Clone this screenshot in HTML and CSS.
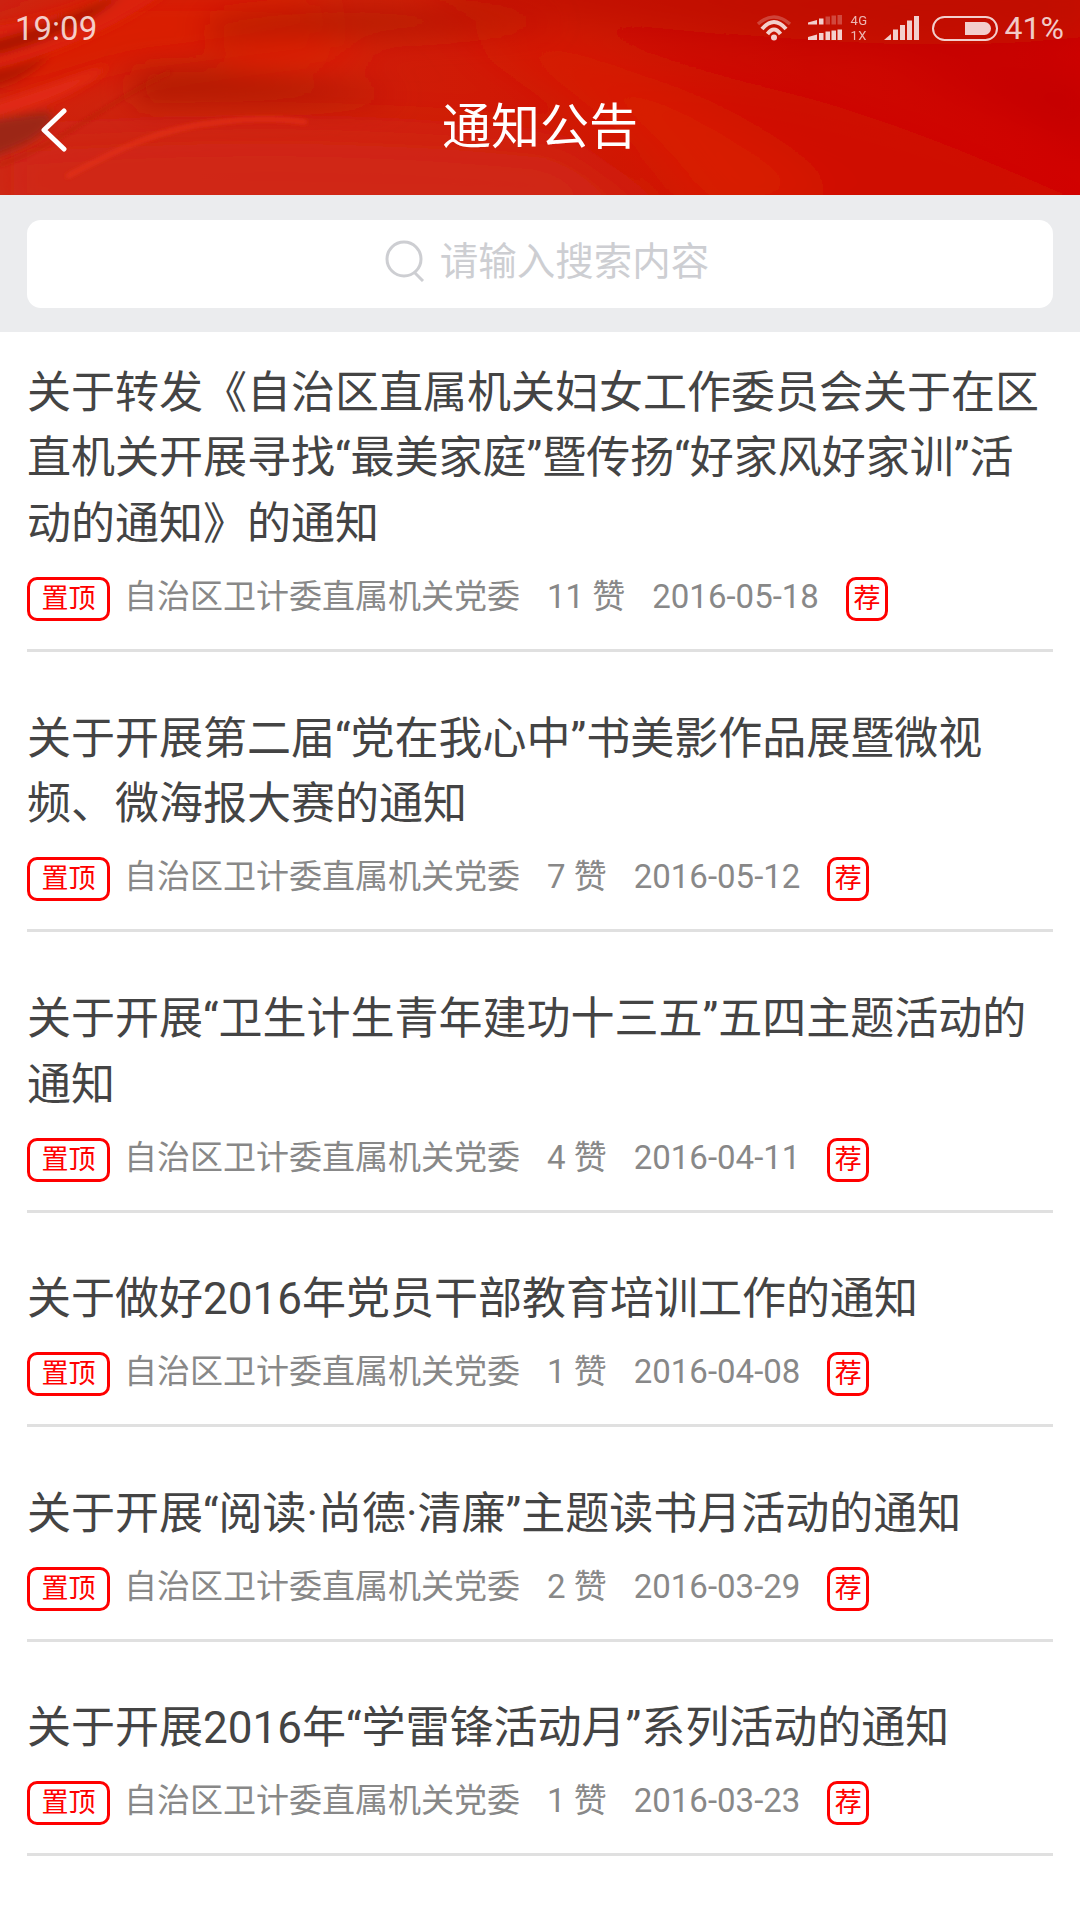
FILE: index.html
```html
<!DOCTYPE html>

<html>
	<head>
		<meta charset="utf-8"/>
		<title>通知公告</title>
		<link rel="stylesheet" href="styles.css">
	</head>
	<body>
		<div id="mainContent">
			<header class="topBar">
				<!-- red flag background -->
				<svg class="flagBg" width="1080" height="195" viewBox="0 0 1080 195">
					<defs>
						<linearGradient id="flagBase" x1="0" y1="0" x2="1" y2="0">
							<stop offset="0" stop-color="#cc2412"/>
							<stop offset="0.45" stop-color="#d01a05"/>
							<stop offset="0.75" stop-color="#cc0a00"/>
							<stop offset="1" stop-color="#d20200"/>
						</linearGradient>
						<filter id="blurBig" x="-20%" y="-50%" width="140%" height="200%"><feGaussianBlur stdDeviation="22"/></filter>
						<filter id="blurWide" x="-20%" y="-50%" width="140%" height="200%"><feGaussianBlur stdDeviation="15"/></filter>
						<filter id="blurMid" x="-20%" y="-50%" width="140%" height="200%"><feGaussianBlur stdDeviation="5"/></filter>
						<filter id="blurSmall" x="-20%" y="-50%" width="140%" height="200%"><feGaussianBlur stdDeviation="2"/></filter>
					</defs>
					<rect width="1080" height="195" fill="url(#flagBase)"/>
					<g filter="url(#blurBig)">
						<path d="M440 -30 L1100 -30 L1100 35 C900 60 700 30 440 5 Z" fill="#c00c00"/>
						<path d="M620 70 C760 70 900 120 1100 210 L1100 240 L700 240 C740 180 690 120 620 70 Z" fill="#cf0700"/>
						<path d="M0 220 L0 140 C200 125 360 125 560 145 L680 230 Z" fill="#d02814"/>
						<path d="M460 30 C580 40 700 90 840 200 L700 220 C640 130 560 80 460 30 Z" fill="#d81a02"/>
						<path d="M880 60 C960 90 1040 120 1100 160 L1100 70 Z" fill="#c40500"/>
						<path d="M0 30 L130 -10 L320 -10 L330 45 L130 70 L0 110 Z" fill="#da1e04"/>
					</g>
					<g filter="url(#blurWide)">
						<path d="M210 22 C300 6 420 6 560 22 C420 34 300 36 210 40 Z" fill="#b41c02"/>
						<path d="M220 52 C280 44 340 44 380 54 C320 64 280 64 225 64 Z" fill="#e42000"/>
						<path d="M130 76 C190 66 270 72 400 96 C290 104 200 102 140 104 Z" fill="#b01c03"/>
					</g>
					<g filter="url(#blurMid)">
						<path d="M-20 28 C30 22 75 10 110 -10 L170 -10 C120 25 60 55 -20 72 Z" fill="#dc2208"/>
						<path d="M-20 44 C20 34 60 20 125 -8 C90 25 40 45 -20 58 Z" fill="#a81205"/>
						<path d="M-20 72 C10 68 30 62 50 55 C30 75 10 85 -20 90 Z" fill="#b21606"/>
						<path d="M-20 108 C30 92 70 78 110 65 C80 92 40 108 -20 120 Z" fill="#e22a12"/>
						<path d="M-20 122 C15 116 35 112 50 112 C60 122 40 145 -20 160 Z" fill="#9c2818"/>
					</g>
					<g filter="url(#blurSmall)" fill="none" stroke-linecap="round">
						<path d="M68 176 C120 148 160 128 220 122 C250 118 280 118 305 122" stroke="#ea3618" stroke-opacity="0.8" stroke-width="4"/>
						<path d="M0 165 C60 145 110 100 170 72" stroke="#b42008" stroke-opacity="0.6" stroke-width="3"/>
					</g>
				</svg>
				<div class="statusBar">
					<span class="statusTime">19:09</span>
					<div class="statusIcons">
						<!-- wifi -->
						<svg width="36" height="26" viewBox="0 0 36 26" class="statusIcon">
							<path d="M2 9 Q18 -5 34 9" fill="none" stroke="#fff" stroke-opacity="0.28" stroke-width="3.5"/>
							<path d="M6 14 Q18 0 30 14" fill="none" stroke="#fff" stroke-width="4"/>
							<path d="M11.5 19 Q18 10 24.5 19" fill="none" stroke="#fff" stroke-width="4"/>
							<circle cx="18" cy="22.5" r="3" fill="#fff"/>
						</svg>
						<!-- dual sim signal -->
						<svg width="35" height="26" viewBox="0 0 35 26" class="statusIcon simIcon">
							<g fill="#fff">
								<path d="M0 7.5 L9 5 L9 9.5 L0 9.5 Z"/>
								<rect x="11" y="3.5" width="4.5" height="6"/>
								<g fill-opacity="0.3">
									<rect x="17.5" y="1.5" width="4.5" height="8"/>
									<rect x="23.5" y="0.5" width="4.5" height="9"/>
									<rect x="29.5" y="0" width="4.5" height="9.5"/>
								</g>
								<path d="M0 22 L9 19.5 L9 25 L0 25 Z"/>
								<rect x="11" y="18" width="4.5" height="7"/>
								<rect x="17.5" y="16.5" width="4.5" height="8.5"/>
								<rect x="23.5" y="15.5" width="4.5" height="9.5"/>
								<rect x="29.5" y="14.5" width="4.5" height="10.5"/>
							</g>
						</svg>
						<div class="netLabel"><span>4G</span><span>1X</span></div>
						<!-- signal -->
						<svg width="35" height="26" viewBox="0 0 35 26" class="statusIcon signalIcon">
							<g fill="#fff">
								<path d="M0 25 L7 19 L7 25 Z"/>
								<rect x="9" y="14.5" width="5" height="10.5"/>
								<rect x="16" y="10" width="5" height="15"/>
								<rect x="23" y="5.5" width="5" height="19.5"/>
								<rect x="30" y="1" width="5" height="24"/>
							</g>
						</svg>
						<!-- battery -->
						<div class="battery"><div class="batteryFill"></div></div>
						<span class="statusPct">41%</span>
					</div>
				</div>
				<div class="navBar">
					<svg class="backIcon" width="26" height="44" viewBox="0 0 26 44">
						<path d="M23 3 L3 22 L23 41" fill="none" stroke="#fff" stroke-width="5" stroke-linecap="round" stroke-linejoin="round"/>
					</svg>
					<h1 class="navTitle">通知公告</h1>
				</div>
			</header>

			<div class="searchHolder">
				<div class="searchBox">
					<svg class="searchIcon" width="40" height="42" viewBox="0 0 40 42">
						<circle cx="19" cy="19" r="17" fill="none" stroke="#cdced2" stroke-width="3"/>
						<path d="M30 33 L38 41" fill="none" stroke="#cdced2" stroke-width="3"/>
					</svg>
					<span class="searchText">请输入搜索内容</span>
				</div>
			</div>

			<div class="noticeList">
				<div class="notice noticeFirst">
					<div class="noticeTitle">关于转发《自治区直属机关妇女工作委员会关于在区直机关开展寻找“最美家庭”暨传扬“好家风好家训”活动的通知》的通知</div>
					<div class="noticeMeta">
						<span class="tagTop">置顶</span>
						<span class="org">自治区卫计委直属机关党委</span>
						<span>11 赞</span>
						<span>2016-05-18</span>
						<span class="tagRec">荐</span>
					</div>
				</div>
				<div class="notice">
					<div class="noticeTitle">关于开展第二届“党在我心中”书美影作品展暨微视频、微海报大赛的通知</div>
					<div class="noticeMeta">
						<span class="tagTop">置顶</span>
						<span class="org">自治区卫计委直属机关党委</span>
						<span>7 赞</span>
						<span>2016-05-12</span>
						<span class="tagRec">荐</span>
					</div>
				</div>
				<div class="notice">
					<div class="noticeTitle">关于开展“卫生计生青年建功十三五”五四主题活动的通知</div>
					<div class="noticeMeta">
						<span class="tagTop">置顶</span>
						<span class="org">自治区卫计委直属机关党委</span>
						<span>4 赞</span>
						<span>2016-04-11</span>
						<span class="tagRec">荐</span>
					</div>
				</div>
				<div class="notice">
					<div class="noticeTitle">关于做好2016年党员干部教育培训工作的通知</div>
					<div class="noticeMeta">
						<span class="tagTop">置顶</span>
						<span class="org">自治区卫计委直属机关党委</span>
						<span>1 赞</span>
						<span>2016-04-08</span>
						<span class="tagRec">荐</span>
					</div>
				</div>
				<div class="notice">
					<div class="noticeTitle">关于开展“阅读·尚德·清廉”主题读书月活动的通知</div>
					<div class="noticeMeta">
						<span class="tagTop">置顶</span>
						<span class="org">自治区卫计委直属机关党委</span>
						<span>2 赞</span>
						<span>2016-03-29</span>
						<span class="tagRec">荐</span>
					</div>
				</div>
				<div class="notice">
					<div class="noticeTitle">关于开展2016年“学雷锋活动月”系列活动的通知</div>
					<div class="noticeMeta">
						<span class="tagTop">置顶</span>
						<span class="org">自治区卫计委直属机关党委</span>
						<span>1 赞</span>
						<span>2016-03-23</span>
						<span class="tagRec">荐</span>
					</div>
				</div>
			</div>
		</div>
	</body>
</html>
```

FILE: styles.css
```css
/*main layout*/
body{
	margin: 0;
	padding: 0;
	background-color: #ffffff;
	font-family: Roboto, "Noto Sans CJK SC", sans-serif;
}
#mainContent{
	width: 1080px;
	height: 1920px;
	overflow: hidden;
}

/*top bar with the flag picture behind it*/
.topBar{
	position: relative;
	height: 195px;
}
.flagBg{
	position: absolute;
	top: 0;
	left: 0;
}
.statusBar{
	position: relative;
	display: flex;
	justify-content: space-between;
	align-items: center;
	height: 56px;
	padding: 0 16px 0 15px;
	color: rgba(255,255,255,0.78);
	font-size: 32px;
}
.statusTime{
	font-size: 33px;
}
.statusIcons{
	display: flex;
	align-items: center;
}
.statusIcon{
	display: block;
	opacity: 0.8;
}
.simIcon{
	margin-left: 16px;
}
.netLabel{
	display: flex;
	flex-direction: column;
	margin-left: 7px;
	font-size: 13px;
	letter-spacing: 0.5px;
	line-height: 15.3px;
	opacity: 0.9;
}
.signalIcon{
	margin-left: 16px;
}
.battery{
	box-sizing: border-box;
	width: 66px;
	height: 25px;
	margin-left: 13px;
	padding: 4px 5px 4px 0;
	border: solid 2px rgba(255,255,255,0.8);
	border-radius: 13px;
	display: flex;
	justify-content: flex-end;
}
.batteryFill{
	width: 26px;
	background-color: rgba(255,255,255,0.8);
	border-radius: 0 7px 7px 0;
}
.statusPct{
	margin-left: 7px;
}

.navBar{
	position: relative;
	height: 139px;
	display: flex;
	justify-content: center;
	padding-top: 41px;
	box-sizing: border-box;
}
.backIcon{
	position: absolute;
	left: 41px;
	top: 52px;
}
.navTitle{
	margin: 0;
	color: #ffffff;
	font-size: 49px;
	font-weight: normal;
	line-height: 62px;
}

/*search*/
.searchHolder{
	background-color: #ebecee;
	padding: 24.5px 27px;
}
.searchBox{
	box-sizing: border-box;
	height: 88px;
	background-color: #ffffff;
	border-radius: 14px;
	display: flex;
	justify-content: center;
	align-items: center;
	gap: 15px;
	padding-left: 14px;
	padding-bottom: 12px;
}
.searchIcon{
	margin-top: 7px;
}
.searchText{
	color: #cdced2;
	font-size: 38.5px;
}

/*notice list*/
.noticeList{
	padding: 0 27px;
}
.notice{
	padding: 54.5px 0 28px 0;
	border-bottom: solid 3px #e0e0e0;
}
.noticeFirst{
	padding-top: 28.5px;
}
.noticeTitle{
	color: #444444;
	font-size: 44px;
	line-height: 65.75px;
}
.noticeMeta{
	display: flex;
	align-items: flex-start;
	gap: 27px;
	margin-top: 19.25px;
	color: #888888;
	font-size: 33px;
	line-height: 40px;
}
.org{
	margin-left: -13px;
}
.tagTop,
.tagRec{
	box-sizing: border-box;
	height: 44px;
	border: solid 3px #ff0000;
	border-radius: 10px;
	color: #ff0000;
	font-size: 27px;
	line-height: 38px;
	text-align: center;
}
.tagTop{
	width: 83px;
}
.tagRec{
	width: 42px;
}
```
